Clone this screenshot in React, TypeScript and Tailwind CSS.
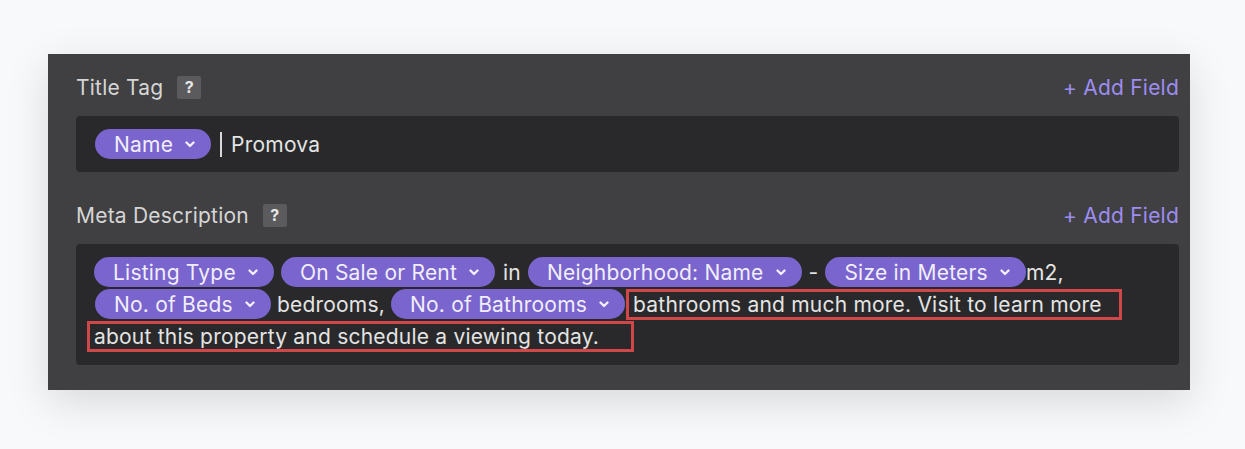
function Chevron() {
  return (
    <svg width="10" height="7" viewBox="0 0 10 7" fill="none" className="shrink-0">
      <path d="M1.5 1.5 5 5l3.5-3.5" stroke="currentColor" strokeWidth="2.4" strokeLinecap="round" strokeLinejoin="round" />
    </svg>
  );
}

function Pill({ label }: { label: string }) {
  return (
    <span className="inline-flex h-[30px] items-center gap-[12px] rounded-full bg-[#7a64cd] pl-[19px] pr-[16px] text-[#f1eefb]">
      {label}
      <Chevron />
    </span>
  );
}

function Help() {
  return (
    <span className="flex h-[23px] w-[24px] items-center justify-center rounded-[2px] bg-[#5b5b5d] text-[16px] font-bold text-[#e6e6e6]">
      ?
    </span>
  );
}

function FieldHeader({ title, gap }: { title: string; gap: string }) {
  return (
    <div className="flex h-[30px] items-center justify-between">
      <div className={`flex items-center ${gap}`}>
        <span className="text-[#d6d6d6]">{title}</span>
        <Help />
      </div>
      <button className="text-[#9e8df1]">+ Add Field</button>
    </div>
  );
}

export default function App() {
  return (
    <div
      className="h-[449px] w-[1245px] bg-[#f8f9fa] pl-[48px] pt-[54px] text-[21px] leading-none tracking-[0.01em]"
      style={{ fontFamily: "Inter, 'Noto Sans', sans-serif" }}
    >
      <div className="w-[1142px] bg-[#404042] pb-[25px] pl-[28px] pr-[11px] pt-[18px] shadow-[0_12px_40px_rgba(0,0,0,0.13)]">
        <FieldHeader title="Title Tag" gap="gap-[14px]" />
        <div className="mt-[14px] flex h-[56px] items-center rounded-[4px] bg-[#29292b] pl-[19px] text-[#e4e4e4]">
          <Pill label="Name" />
          <span className="ml-[9px] h-[25px] w-[2px] bg-[#d8d8d8]" />
          <span className="ml-[9px]">Promova</span>
        </div>

        <div className="mt-[28px]">
          <FieldHeader title="Meta Description" gap="gap-[14px]" />
        </div>
        <div className="mt-[14px] flex flex-col rounded-[4px] bg-[#29292b] pb-[13px] pl-[11px] pt-[12px] text-[#e4e4e4]">
          <div className="flex h-[32px] items-center pl-[7px]">
            <Pill label="Listing Type" />
            <span className="ml-[7px]" />
            <Pill label="On Sale or Rent" />
            <span className="ml-[8px] mr-[7px]">in</span>
            <Pill label="Neighborhood: Name" />
            <span className="ml-[7px] mr-[7px]">-</span>
            <Pill label="Size in Meters" />
            <span>m2,</span>
          </div>
          <div className="flex h-[32px] items-center pl-[8px]">
            <Pill label="No. of Beds" />
            <span className="mx-[6px]">bedrooms,</span>
            <Pill label="No. of Bathrooms" />
            <span className="ml-[1px] flex h-[31px] items-center border-[3px] border-[#d0474a] pl-[4px] pr-[17px]">
              bathrooms and much more. Visit to learn more
            </span>
          </div>
          <div className="flex h-[32px] items-center">
            <span className="flex h-[31px] items-center border-[3px] border-[#d0474a] pl-[4px] pr-[32px]">
              about this property and schedule a viewing today.
            </span>
          </div>
        </div>
      </div>
    </div>
  );
}
